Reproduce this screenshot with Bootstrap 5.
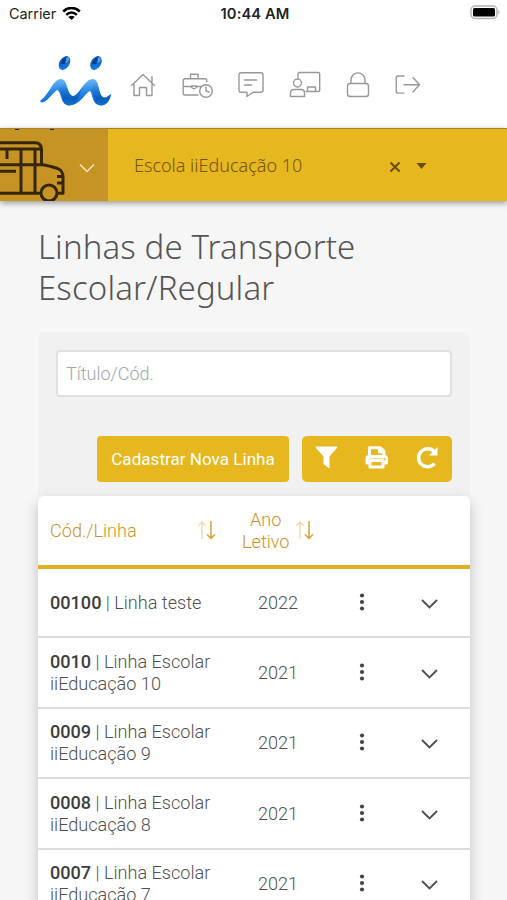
<!DOCTYPE html>
<html lang="pt-BR">
<head>
<meta charset="utf-8">
<meta name="viewport" content="width=device-width, initial-scale=1">
<title>Linhas de Transporte</title>
<link href="https://cdn.jsdelivr.net/npm/bootstrap@5.3.0/dist/css/bootstrap.min.css" rel="stylesheet">
<style>
:root{--gold:#e6b71e;--gold-dark:#c69425;--ink:#505050}
html,body{height:900px;overflow:hidden}
body{background:#f6f6f6;font-family:Roboto,sans-serif;font-weight:300;font-size:18px;color:var(--ink)}
svg{display:block;flex:none}
.status-bar{height:28px;padding:0 6px 0 9px;font-family:Inter,sans-serif;font-size:14.4px;color:#222;font-weight:400}
.status-bar>div{flex:1 1 0}
.status-bar .clock{font-weight:600;font-size:14.7px;letter-spacing:.1px;white-space:nowrap}
.top-nav{height:100px;padding-left:39px}
.school-bar{height:73px;background:var(--gold);box-shadow:0 2px 6px rgba(0,0,0,.4);border-top:1px solid #a98422;position:relative}
.bus-box{width:108px;background:var(--gold-dark);height:72px;overflow:hidden}
.school-name{font-family:"Noto Sans",sans-serif;font-size:18px;font-weight:300;color:#765506;width:255px;padding-left:26px;white-space:nowrap}
.page-title{font-family:"Noto Sans",sans-serif;font-weight:300;font-size:33px;line-height:41px;color:#555;margin:25px 0 0;letter-spacing:.12px}
.page-title span{display:block;white-space:nowrap}
.wrap{padding:0 37px 0 38px}
.filter-panel{background:#f1f1f1;margin-top:24px;padding:18px 18px 14px;height:164px;border-radius:6px 6px 0 0}
.filter-panel .form-control{height:47px;border:2px solid #dfe1e2;border-radius:4px;font-size:18px;font-weight:300;padding:0 8px}
.form-control::placeholder{color:#a0a6ab;opacity:1}
.actions{margin-top:39px;gap:13px}
.btn-gold,.btn-gold:hover{background:var(--gold);color:#fff;border:0;border-radius:4px;height:46px;font-size:17.1px;font-weight:400;padding:2px 0 0;width:192px}
.icon-group{background:var(--gold);border-radius:5px;height:46px;width:150px}
.list-card{background:#fff;border-radius:6px 6px 0 0;box-shadow:0 6px 14px rgba(0,0,0,.22);height:430px}
.line-table{table-layout:fixed;margin:0;--bs-table-bg:transparent;color:var(--ink);font-size:18.1px;line-height:22px;font-weight:300}
.line-table>:not(caption)>*>*{border:0;padding:0;vertical-align:middle;color:inherit;box-shadow:none}
.line-table>thead>tr>*{height:71px;border-bottom:4px solid #e0b11f;font-weight:300;color:#cd9329}
.line-table>tbody>tr>*{height:70.5px;padding-top:1px;border-bottom:2px solid #dadddd}
.line-table>tbody>tr:first-child>*{height:70px;padding:0}
.line-table>:not(caption)>*>:first-child,.line-table>tbody>tr:first-child>:first-child{padding-left:12px}
.line-table b{font-weight:500;color:#3d3d3d}
</style>
<script src="https://cdn.jsdelivr.net/npm/bootstrap@5.3.0/dist/js/bootstrap.bundle.min.js"></script>
</head>
<body>
<header class="bg-white">
  <div class="status-bar d-flex align-items-center">
    <div class="d-flex align-items-center gap-1"><span>Carrier</span>
      <svg style="margin-left:2px" width="19" height="14" viewBox="0 0 19 14" fill="none" stroke="#000" stroke-width="2.500"><path d="M1.200 4.500C6-.3 13-.3 17.800 4.500M4.200 7.800c3.200-3 7.400-3 10.600 0"/><path d="M9.500 13 6.300 9.900q3.200-2.500 6.400 0z" fill="#000" stroke="none"/></svg>
    </div>
    <div class="clock text-center">10:44 AM</div>
    <div class="d-flex justify-content-end">
      <svg class="mb-1" width="31" height="16" viewBox="0 -1 31 16"><rect x="1" y="1" width="26" height="12.500" rx="4" fill="#fff" stroke="#b5b5b5" stroke-width="1.500"/><rect x="3" y="3" width="22" height="8.500" rx="1.500"/><path d="M28.500 5q2 2.200 0 4.500z" fill="#999"/></svg>
    </div>
  </div>
  <nav class="top-nav d-flex align-items-start">
    <a class="d-block pt-4" href="#" aria-label="Início"><svg class="mt-1" width="74" height="54" viewBox="0 1 74 54" overflow="visible">
      <defs><linearGradient id="wave" x1="0" y1="0" x2="0" y2="1"><stop offset="0" stop-color="#6ab8f5"/><stop offset=".5" stop-color="#2583e4"/><stop offset="1" stop-color="#0b6ad0"/></linearGradient>
      <linearGradient id="fold" x1="0" y1="0" x2="0" y2="1"><stop offset="0" stop-color="#0755b5" stop-opacity="0"/><stop offset=".7" stop-color="#064da7"/><stop offset="1" stop-color="#1273da"/></linearGradient>
      <linearGradient id="deep" x1="0" y1="0" x2="1" y2="1"><stop offset="0" stop-color="#064caa"/><stop offset="1" stop-color="#1686eb"/></linearGradient></defs>
      <path d="M1.500 45.500C10 40 14 24 22 24C29 24 28 40 34 41C40 41 45 24 54 24C61 24 59 41 65 42.500C68 43 70 40 72 39C71 46 67 50.500 62 50.500C52 50 54 37 50.500 36C46 39 40 50.500 30 50.500C21 50 23 37 18 35C13 39 8 47 2.500 47.500Q.5 47 1.500 45.500z" fill="url(#wave)"/>
      <path d="M23 28C28 27 28 40 34 41C37 41 40 37 42 34C41 44 36 50 30 50.500C22 49 24 38 20 35zM55 28C60 27 60 41 65 42.500C68 43 70 40 72 39C71 46 67 50.500 62 50.500C53 49 56 38 52 35z" fill="url(#fold)" opacity=".6"/>
      <ellipse cx="25.500" cy="8" rx="5" ry="7.500" transform="rotate(32 25.500 8)" fill="url(#deep)"/><path d="M22 9c1-4 4-7 6-6 1 2-2 3-2 6z" fill="#063b86"/><path d="M27 3q4-2 3 2-2 4-4 2 2-1 1-4z" fill="#57a5e8"/>
      <ellipse cx="57" cy="8" rx="5" ry="7.500" transform="rotate(32 57 8)" fill="url(#deep)"/><path d="M53.500 9c1-4 4-7 6-6 1 2-2 3-2 6z" fill="#063b86"/><path d="M58.500 3q4-2 3 2-2 4-4 2 2-1 1-4z" fill="#57a5e8"/>
    </svg></a>
    <svg style="margin:43px 0 0 17px" width="292" height="30" viewBox="130 71 292 30" fill="none" stroke="#989898" stroke-width="1.400" stroke-linecap="round" stroke-linejoin="round">
      <path d="M131.500 85.500 143 74.500l11.500 11M134 83.500v12h5.500v-8h7v8h5.500v-12M152 76.500v6"/>
      <path d="M198 95h-13q-1.800 0-1.800-1.800V80.500q0-1.800 1.800-1.800h20q1.800 0 1.800 1.800v1.300M190.500 78.500v-4.300h7.500v4.300M183.500 86.500h8m5 0h5M191.500 86h5v1.500l-2.500 1.500-2.500-1.500z"/><circle cx="206" cy="91" r="6.300"/><path d="M206 87v4l3 1"/>
      <path d="M241 72.700h20q2 0 2 2v15.500q0 2-2 2h-8l-6 4.300v-4.300h-6q-2 0-2-2V74.700q0-2 2-2zM244.500 80h12M244.500 85h7"/>
      <path d="M298 77.500V74q0-1.500 1.500-1.500h18.700q1.500 0 1.500 1.500v16q0 1.500-1.500 1.500H306M307.500 91v-4h8v4"/><circle cx="297.500" cy="83" r="4"/><path d="M290.500 96.500V93q0-3.500 3.500-3.500h7q3.500 0 3.500 3.500v3.500z"/>
      <rect x="347.500" y="83.500" width="21" height="13" rx="2.500"/><path d="M351 83v-3c0-9.500 14-9.500 14 0v3"/>
      <path d="M404 76h-6q-1.800 0-1.800 1.800v13.500q0 1.800 1.800 1.800h6M404 84.700h15M413 77.500l6.500 7.200-6.500 7.200"/>
    </svg>
  </nav>
</header>
<section class="school-bar d-flex align-items-center">
  <div class="bus-box">
    <svg width="108" height="72" viewBox="0 129 108 72" fill="none" stroke="#35260a" stroke-width="3" stroke-linejoin="round">
      <path d="M-2 142.800H35q6.500 0 6.500 7v15M-2 149H40M-2 164.700H43c14 3 20 4 20 12v16.600H57M-2 193.300H41M7 150v9M21 149v44M35 149v44M-2 171.300H16M57 176.500h5M57 183h5"/><circle cx="49" cy="193" r="8"/>
      <path d="M15 129h4M50 129h4" stroke-width="2"/>
      <path d="M80 164.500l7 7 7-7" stroke="#f5e4be" stroke-width="1.500"/>
    </svg>
  </div>
  <div class="school-name">Escola iiEducação 10</div>
  <svg width="70" height="20" viewBox="363 155 70 20" fill="none"><path d="M390.500 162.500l9 9m0-9-9 9" stroke="#684d0d" stroke-width="2"/><path d="M416.500 163h10l-5 6z" fill="#684d0d"/></svg>
</section>
<main class="wrap">
  <h1 class="page-title"><span>Linhas de Transporte</span><span>Escolar/Regular</span></h1>
  <section class="filter-panel">
    <input class="form-control" placeholder="Título/Cód." aria-label="Título ou código">
    <div class="actions d-flex justify-content-end">
      <button class="btn btn-gold">Cadastrar Nova Linha</button>
      <div class="icon-group">
        <svg width="150" height="46" viewBox="302 436 150 46" fill="none" stroke="#fff" stroke-width="3">
          <path d="M316 446.500h20.500q1.500 0 .5 1.500l-7.500 8.500v12l-6-4.500v-7.500l-7.500-8.500q-1-1.500 0-1.500z" fill="#fff" stroke="none"/>
          <path d="M369.500 456v-8.300h10.500l4 3.500v4.800M379.500 448v4h4.500M370 463h-3v-4.500q0-2 2-2h15.500q2 0 2 2v4.500h-3M370 460.500h13v6.500h-13z" stroke-linejoin="round"/><path d="M369 456.500h15v3h-15z" stroke-width="2"/><circle cx="384.500" cy="459" r="1" fill="var(--gold)" stroke="none"/>
          <path d="M434.500 463.500a9 9 0 1 1 0-11.500" stroke-width="3.500"/><path d="M437.500 447v8.500h-8.500z" fill="#fff" stroke="none"/>
        </svg>
      </div>
    </div>
  </section>
  <section class="list-card">
    <table class="table line-table w-100">
      <colgroup><col style="width:192px"><col style="width:96px"><col style="width:72px"><col></colgroup>
      <thead><tr>
        <th><div class="d-flex justify-content-between align-items-center"><span>Cód./Linha</span>
          <svg style="margin-right:10px" width="26" height="22" viewBox="0 1 26 22" fill="none" stroke="#d6a333" stroke-width="1.500"><path d="M8 20V3M4.500 6.500 8 3l3.500 3.500" opacity=".4"/><path d="M17 2v17M13 15.500l4 4 4-4"/></svg></div></th>
        <th><div class="d-flex align-items-center text-center"><span class="ms-2 ps-1">Ano<br>Letivo</span>
          <svg class="ms-1" width="24" height="22" viewBox="2 1 24 22" fill="none" stroke="#d6a333" stroke-width="1.500"><path d="M8 20V3M4.500 6.500 8 3l3.500 3.500" opacity=".4"/><path d="M17 2v17M13 15.500l4 4 4-4"/></svg></div></th>
        <th></th><th></th>
      </tr></thead>
      <tbody id="lines"></tbody>
    </table>
  </section>
</main>
<script>
const lines=[['00100','Linha teste','',2022],['0010','Linha Escolar','iiEducação 10',2021],['0009','Linha Escolar','iiEducação 9',2021],['0008','Linha Escolar','iiEducação 8',2021],['0007','Linha Escolar','iiEducação 7',2021]];
document.getElementById('lines').innerHTML=lines.map(([code,name,school,year])=>`<tr>
<td class="text-nowrap"><b>${code}</b> | ${name}${school?'<br>'+school:''}</td>
<td class="text-center">${year}</td>
<td><svg class="mx-auto" width="6" height="20" viewBox="0 0 6 20" fill="#444"><circle cx="3" cy="2.500" r="2.100"/><circle cx="3" cy="9" r="2.100"/><circle cx="3" cy="15.500" r="2.100"/></svg></td>
<td><svg class="mx-auto" width="26" height="16" viewBox="0 0 26 12" fill="none" stroke="#505050" stroke-width="1.900"><path d="M1 3l7.500 7.500L16 3"/></svg></td></tr>`).join('');
</script>
</body>
</html>
